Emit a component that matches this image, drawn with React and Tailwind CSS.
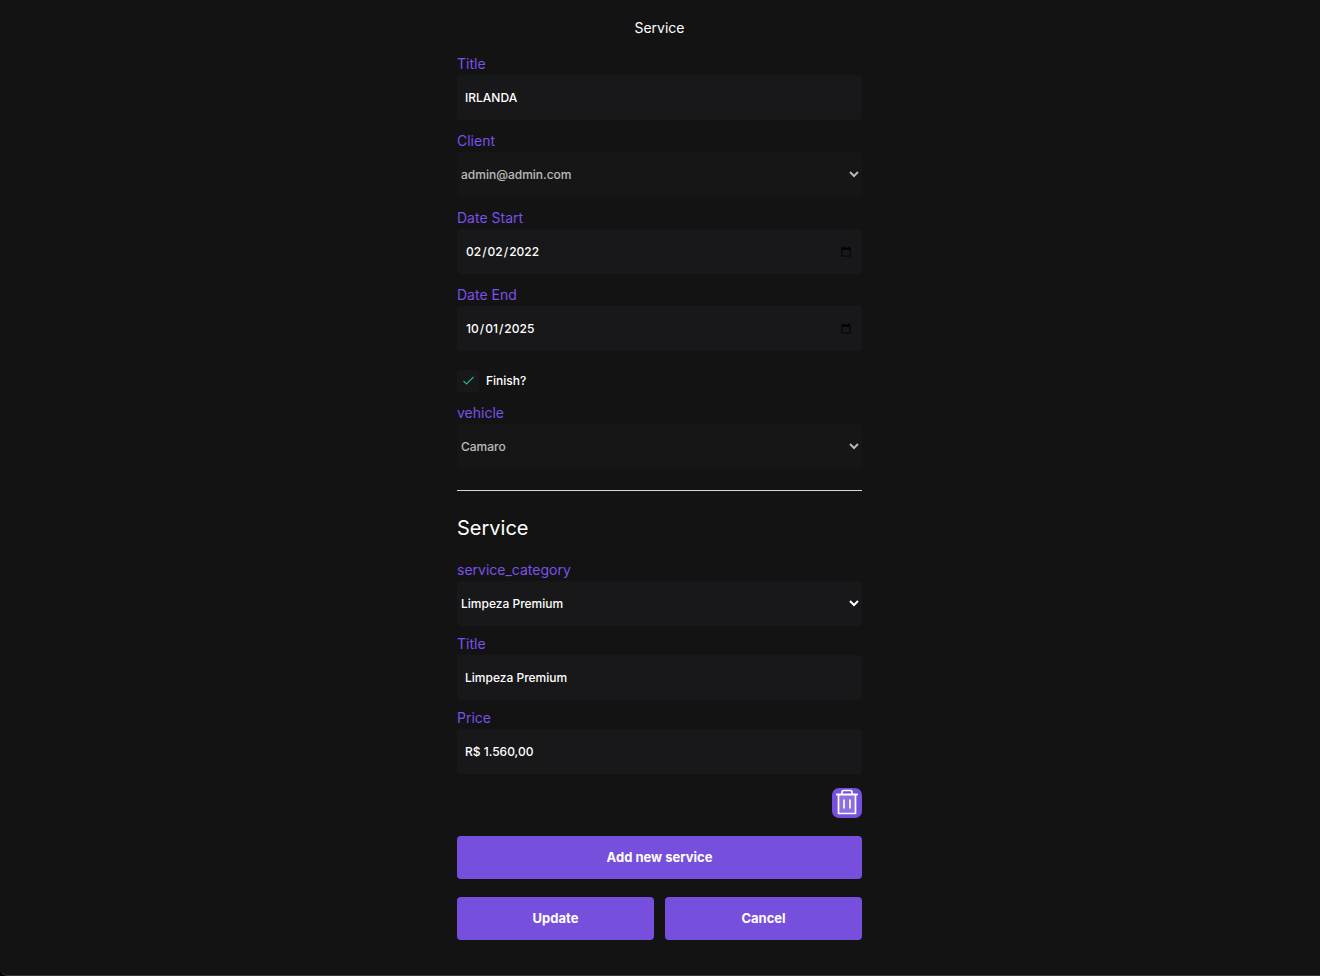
import { useId } from "react";

const control =
  "block h-[45px] w-full rounded-[4px] border-0 bg-[#18181a] text-[12px] font-medium text-white outline-none focus:ring-1 focus:ring-[#7650dc]";

const action =
  "h-[43px] flex-1 cursor-pointer rounded-[4px] bg-[#7650dc] text-[13px] font-bold text-white hover:bg-[#6843cc]";

function Label({ htmlFor, children }) {
  return (
    <label htmlFor={htmlFor} className="block text-[14px] leading-[22px] text-[#7c50ea]">
      {children}
    </label>
  );
}

function TextField({ label, type = "text", value }) {
  const id = useId();
  return (
    <div>
      <Label htmlFor={id}>{label}</Label>
      <input id={id} type={type} defaultValue={value} className={`${control} px-2`} />
    </div>
  );
}

function SelectField({ label, value, disabled = false }) {
  const id = useId();
  return (
    <div>
      <Label htmlFor={id}>{label}</Label>
      <select
        id={id}
        defaultValue={value}
        disabled={disabled}
        className={`${control} disabled:opacity-70`}
      >
        <option>{value}</option>
      </select>
    </div>
  );
}

function TrashIcon() {
  return (
    <svg viewBox="0 0 30 30" className="size-full" fill="none" stroke="white" aria-hidden="true">
      <path d="M6.500 6.500h17v19h-17z" fill="white" fillOpacity="0.18" strokeWidth="1.700" strokeLinejoin="round" />
      <path d="M4 6.500h22" strokeWidth="1.700" />
      <path d="M10 6V4a1.500 1.500 0 0 1 1.500-1.500h7A1.500 1.500 0 0 1 20 4v2" strokeWidth="1.700" />
      <path d="M12 11.500v9M18 11.500v9" strokeWidth="1.700" />
    </svg>
  );
}

export default function App() {
  return (
    <div className="bg-black font-['Inter',sans-serif]">
      <main className="min-h-screen rounded-bl-lg border-b border-[#3b3738] bg-[#131313] pt-[17px] pr-[17px] pb-[34px] pl-4">
        <form className="mx-auto w-full max-w-[405px]" onSubmit={(e) => e.preventDefault()}>
          <h1 className="mb-[14px] text-center text-[14px] leading-[22px] text-white">
            Service
          </h1>

          <div className="flex flex-col gap-[10px]">
            <TextField label="Title" value="IRLANDA" />
            <SelectField label="Client" value="admin@admin.com" disabled />
            <TextField label="Date Start" type="date" value="2022-02-02" />
            <TextField label="Date End" type="date" value="2025-10-01" />
          </div>

          <label className="mt-[19px] mb-[10px] flex items-center gap-[7px] text-[12px] font-medium text-white">
            <span className="grid size-[22px]">
              <input
                type="checkbox"
                defaultChecked
                className="peer col-start-1 row-start-1 size-[22px] appearance-none rounded-[4px] bg-[#18181a]"
              />
              <svg
                viewBox="0 0 22 22"
                className="pointer-events-none invisible col-start-1 row-start-1 size-[22px] peer-checked:visible"
                fill="none"
                stroke="#2fae82"
                strokeWidth="1.200"
                aria-hidden="true"
              >
                <path d="M6.500 11l3 3 7-7" />
              </svg>
            </span>
            Finish?
          </label>

          <SelectField label="vehicle" value="Camaro" disabled />

          <hr className="mt-[21px] border-[#d9d9d9]" />

          <h2 className="mt-[21px] mb-[15px] text-[20px] leading-8 text-white">Service</h2>

          <div className="flex flex-col gap-[7px]">
            <SelectField label="service_category" value="Limpeza Premium" />
            <TextField label="Title" value="Limpeza Premium" />
            <TextField label="Price" value="R$ 1.560,00" />
          </div>

          <div className="mt-[14px] flex justify-end">
            <button
              type="button"
              aria-label="Remove service"
              className="size-[30px] cursor-pointer rounded-[7px] bg-[#7650dc]"
            >
              <TrashIcon />
            </button>
          </div>

          <div className="mt-[18px] flex">
            <button type="button" className={action}>Add new service</button>
          </div>
          <div className="mt-[18px] flex gap-[11px]">
            <button type="submit" className={action}>Update</button>
            <button type="button" className={action}>Cancel</button>
          </div>
        </form>
      </main>
    </div>
  );
}
